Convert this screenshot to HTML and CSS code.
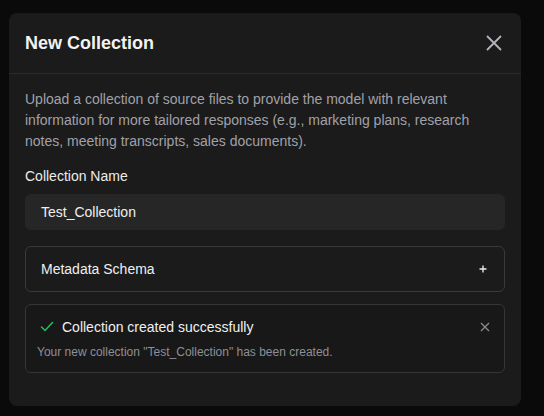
FILE: index.html
```html
<!DOCTYPE html>
<html>
<head>
<meta charset="utf-8">
<link rel="stylesheet" href="styles.css">
</head>
<body>
<div class="modal">
  <div class="modal-header">
    <h2 class="modal-title">New Collection</h2>
    <button class="close-btn" aria-label="Close">
      <svg width="16" height="16" viewBox="0 0 16 16"><path d="M1.5 1.5 14.5 14.5M14.5 1.5 1.5 14.5" stroke="currentColor" stroke-width="1.8" stroke-linecap="round" fill="none"/></svg>
    </button>
  </div>
  <div class="modal-body">
    <p class="desc">Upload a collection of source files to provide the model with relevant information for more tailored responses (e.g., marketing plans, research notes, meeting transcripts, sales documents).</p>
    <label class="field-label">Collection Name</label>
    <div class="input">Test_Collection</div>
    <div class="accordion">
      <span>Metadata Schema</span>
      <svg width="10" height="10" viewBox="0 0 10 10"><path d="M5 1.5v7M1.5 5h7" stroke="currentColor" stroke-width="1.3" fill="none"/></svg>
    </div>
    <div class="toast">
      <div class="toast-head">
        <svg class="check" width="16" height="16" viewBox="0 0 16 16"><path d="M2.5 8 6 11.5 13.5 3.5" stroke="#22c55e" stroke-width="1.4" fill="none" stroke-linecap="round" stroke-linejoin="round"/></svg>
        <span class="toast-title">Collection created successfully</span>
        <svg class="toast-x" width="10" height="10" viewBox="0 0 10 10"><path d="M1 1 9 9M9 1 1 9" stroke="currentColor" stroke-width="1.3" fill="none"/></svg>
      </div>
      <div class="toast-desc">Your new collection "Test_Collection" has been created.</div>
    </div>
  </div>
</div>
</body>
</html>
```
FILE: styles.css
```css
* { box-sizing: border-box; }
html, body { margin: 0; padding: 0; }
body {
  background: #0a0a0a;
  font-family: "Liberation Sans", Arial, sans-serif;
  width: 544px;
  height: 416px;
  overflow: hidden;
  padding: 13px 23px 0 9px;
}
.modal {
  width: 512px;
  height: 393px;
  background: #1b1b1b;
  border-radius: 8px;
}
.modal-header {
  height: 61px;
  border-bottom: 1px solid #2a2a2a;
  display: flex;
  align-items: center;
  justify-content: space-between;
  padding: 0 19px 0 16px;
}
.modal-title {
  margin: 0;
  font-size: 18px;
  font-weight: 700;
  color: #f2f2f2;
  line-height: 24px;
}
.close-btn {
  background: none;
  border: 0;
  padding: 0;
  color: #b4b4bc;
  display: flex;
  width: 16px;
  height: 16px;
}
.modal-body {
  padding: 15px 16px 0 16px;
  display: flex;
  flex-direction: column;
}
.desc {
  margin: 0;
  font-size: 14px;
  line-height: 21px;
  color: #a1a1aa;
}
.field-label {
  margin-top: 14px;
  font-size: 14px;
  line-height: 20px;
  color: #ececec;
}
.input {
  margin-top: 8px;
  height: 36px;
  background: #262626;
  border-radius: 6px;
  padding: 0 16px;
  display: flex;
  align-items: center;
  font-size: 14px;
  color: #efefef;
}
.accordion {
  margin-top: 16px;
  height: 46px;
  border: 1px solid #3a3a3a;
  border-radius: 6px;
  padding: 0 16px 0 15px;
  display: flex;
  align-items: center;
  justify-content: space-between;
  font-size: 14px;
  color: #efefef;
}
.accordion svg { color: #f0f0f0; }
.toast {
  margin-top: 12px;
  height: 69px;
  border: 1px solid #363636;
  border-radius: 6px;
  background: #181818;
  padding: 12px 14px 0 13px;
}
.toast-head {
  display: flex;
  align-items: center;
  height: 20px;
}
.check { flex: none; }
.toast-title {
  margin-left: 7px;
  font-size: 14px;
  color: #f0f0f0;
  flex: 1;
}
.toast-x { color: #8a8a8a; }
.toast-desc {
  margin-top: 7px;
  margin-left: -2px;
  font-size: 12px;
  line-height: 16px;
  color: #8f8f95;
}
```
